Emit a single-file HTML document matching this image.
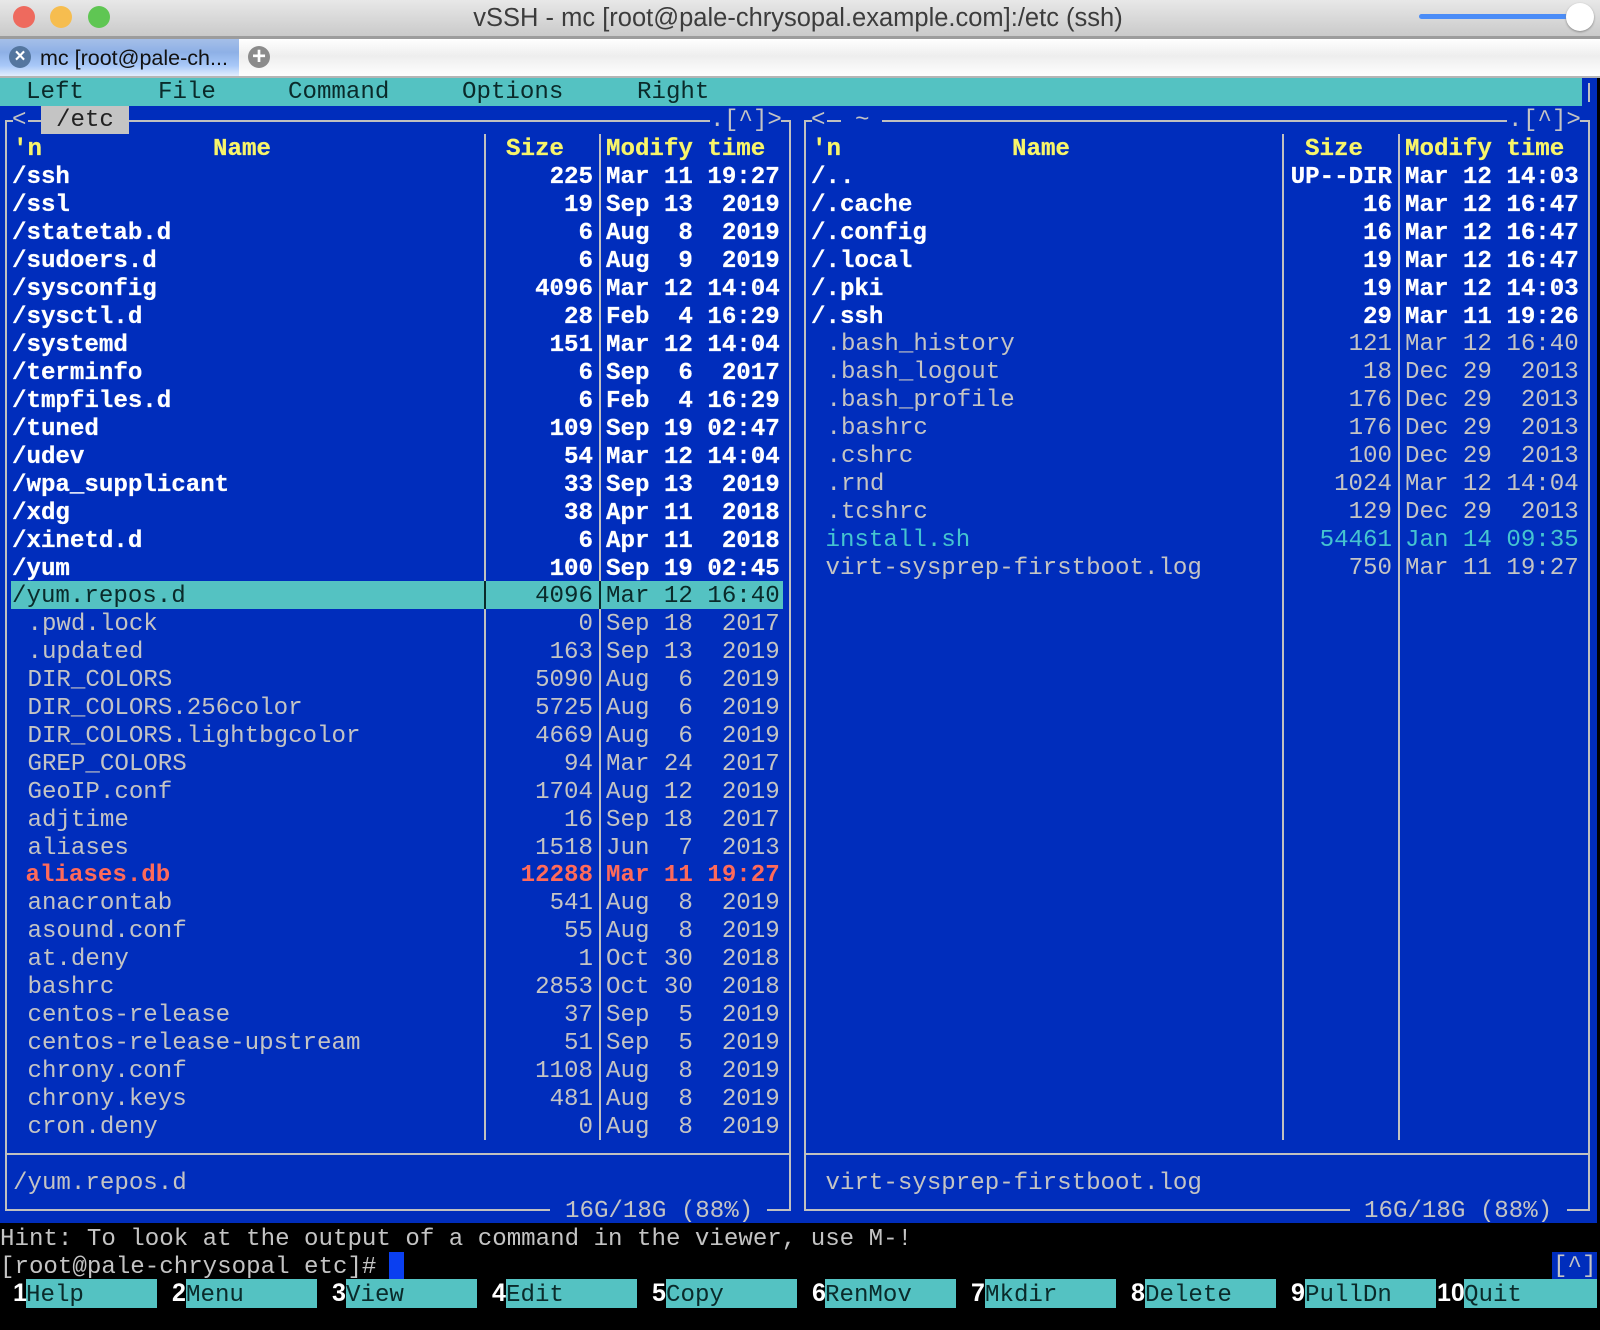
<!DOCTYPE html>
<html><head><meta charset="utf-8"><style>
html,body{margin:0;padding:0;background:#000}
#r{position:relative;width:1600px;height:1330px;overflow:hidden;background:#000;font-family:"Liberation Mono",monospace;font-size:24.14px}
pre{position:absolute;margin:2.8px 0 0;font:inherit;line-height:28px;color:#c4c4c4;white-space:pre}
.b{font-weight:bold;color:#fff;-webkit-text-stroke:.25px #fff}
.y{font-weight:bold;color:#f8f56a;-webkit-text-stroke:.25px #f8f56a}
.k{color:#0a2a2a}
.e{font-weight:bold;color:#ff6a5a}
.c{color:#45c4d0}
.s{text-align:right;width:110px}
.d{position:absolute;background:#c0c0c0}
.a{position:absolute}
.t{position:absolute;background:#54c2c2;height:29px;top:1279px}
.n{position:absolute;font-weight:bold;color:#fff;top:1279px;line-height:28px;font-family:"Liberation Sans",sans-serif;font-size:25px}
</style></head><body><div id="r">
<div class="a" style="left:0;top:0;width:1600px;height:37px;background:linear-gradient(#e8e8e8,#c9c9c9)"></div>
<div class="a" style="left:0;top:36px;width:1600px;height:3px;background:#9c9c9c"></div>
<div class="a" style="left:13px;top:6px;width:22px;height:22px;border-radius:50%;background:#ee6a5e"></div>
<div class="a" style="left:50px;top:6px;width:22px;height:22px;border-radius:50%;background:#f6bd4f"></div>
<div class="a" style="left:88px;top:6px;width:22px;height:22px;border-radius:50%;background:#5fc653"></div>
<div class="a" style="left:0;top:3px;width:1600px;text-align:center;padding-right:4px;box-sizing:border-box;font-family:'Liberation Sans',sans-serif;font-size:25.5px;line-height:30px;color:#3c3c3c">vSSH - mc [root@pale-chrysopal.example.com]:/etc (ssh)</div>
<div class="a" style="left:1419px;top:14px;width:150px;height:5px;border-radius:3px;background:#4a8cf7"></div>
<div class="a" style="left:1566px;top:3px;width:28px;height:28px;border-radius:50%;background:#fff;box-shadow:0 1px 2px #888"></div>
<div class="a" style="left:0;top:39px;width:1600px;height:38px;background:linear-gradient(#fff,#eee 45%,#fff)"></div>
<div class="a" style="left:0;top:39px;width:239px;height:38px;background:linear-gradient(#a5bfe8,#8eb0e6 35%,#a8c8f8 70%,#e8f2ff)"></div>
<div class="a" style="left:9px;top:46px;width:22px;height:22px;border-radius:50%;background:#54769f;color:#fff;font:bold 19px/22px 'Liberation Sans',sans-serif;text-align:center">×</div>
<div class="a" style="left:40px;top:43px;font-family:'Liberation Sans',sans-serif;font-size:21.5px;line-height:30px;color:#111;white-space:pre">mc [root@pale-ch...</div>
<div class="a" style="left:248px;top:46px;width:22px;height:22px;border-radius:50%;background:#8b8b8b;color:#fff;font:bold 24px/22px 'Liberation Sans',sans-serif;text-align:center">+</div>
<div class="a" style="left:0;top:76px;width:1600px;height:2px;background:#b5b5b5"></div>

<div class="a" style="left:0;top:78px;width:1597px;height:1145px;background:#002dbc"></div>
<div class="a" style="left:0;top:78px;width:1582px;height:28px;background:#54c2c2"></div>
<div class="d" style="left:1588px;top:83px;width:2px;height:19px"></div>
<pre class="k" style="left:26px;top:76px">Left</pre>
<pre class="k" style="left:158px;top:76px">File</pre>
<pre class="k" style="left:288px;top:76px">Command</pre>
<pre class="k" style="left:462px;top:76px">Options</pre>
<pre class="k" style="left:637px;top:76px">Right</pre>

<!-- frames -->
<div class="d" style="left:5px;top:120px;width:2px;height:1091px"></div>
<div class="d" style="left:789px;top:120px;width:2px;height:1091px"></div>
<div class="d" style="left:5px;top:120px;width:8px;height:2px"></div>
<div class="d" style="left:28px;top:120px;width:14px;height:2px"></div>
<div class="d" style="left:129px;top:120px;width:581px;height:2px"></div>
<div class="d" style="left:781px;top:120px;width:10px;height:2px"></div>
<div class="d" style="left:5px;top:1153px;width:786px;height:2px"></div>
<div class="d" style="left:5px;top:1209px;width:545px;height:2px"></div>
<div class="d" style="left:767px;top:1209px;width:24px;height:2px"></div>
<div class="d" style="left:484px;top:134px;width:2px;height:1006px"></div>
<div class="d" style="left:599px;top:134px;width:2px;height:1006px"></div>
<div class="a" style="left:41px;top:106px;width:88px;height:28px;background:#c4c4c4"></div>
<pre class="k" style="left:56px;top:104px;color:#222">/etc</pre>
<pre style="left:12px;top:104px">&lt;</pre>
<pre style="left:710px;top:104px">.</pre>
<pre style="left:724px;top:104px">[^]&gt;</pre>

<div class="d" style="left:804px;top:120px;width:2px;height:1091px"></div>
<div class="d" style="left:1588px;top:120px;width:2px;height:1091px"></div>
<div class="d" style="left:804px;top:120px;width:8px;height:2px"></div>
<div class="d" style="left:827px;top:120px;width:14px;height:2px"></div>
<div class="d" style="left:882px;top:120px;width:625px;height:2px"></div>
<div class="d" style="left:1580px;top:120px;width:10px;height:2px"></div>
<div class="d" style="left:804px;top:1153px;width:786px;height:2px"></div>
<div class="d" style="left:804px;top:1209px;width:546px;height:2px"></div>
<div class="d" style="left:1567px;top:1209px;width:23px;height:2px"></div>
<div class="d" style="left:1282px;top:134px;width:2px;height:1006px"></div>
<div class="d" style="left:1398px;top:134px;width:2px;height:1006px"></div>
<pre style="left:811px;top:104px">&lt;</pre>
<pre style="left:855px;top:104px">~</pre>
<pre style="left:1508px;top:104px">.</pre>
<pre style="left:1523px;top:104px">[^]&gt;</pre>

<!-- left headers -->
<pre class="y" style="left:13px;top:133px">'n</pre>
<pre class="y" style="left:213px;top:133px">Name</pre>
<pre class="y" style="left:506px;top:133px">Size</pre>
<pre class="y" style="left:606px;top:133px">Modify time</pre>

<!-- left bold -->
<pre class="b" style="left:12px;top:161px">/ssh
/ssl
/statetab.d
/sudoers.d
/sysconfig
/sysctl.d
/systemd
/terminfo
/tmpfiles.d
/tuned
/udev
/wpa_supplicant
/xdg
/xinetd.d
/yum</pre>
<pre class="b s" style="left:483px;top:161px">225
19
6
6
4096
28
151
6
6
109
54
33
38
6
100</pre>
<pre class="b" style="left:606px;top:161px">Mar 11 19:27
Sep 13  2019
Aug  8  2019
Aug  9  2019
Mar 12 14:04
Feb  4 16:29
Mar 12 14:04
Sep  6  2017
Feb  4 16:29
Sep 19 02:47
Mar 12 14:04
Sep 13  2019
Apr 11  2018
Apr 11  2018
Sep 19 02:45</pre>

<!-- selected -->
<div class="a" style="left:11px;top:581px;width:772px;height:28px;background:#54c2c2"></div>
<div class="a" style="left:484px;top:581px;width:2px;height:28px;background:#0a2a2a"></div>
<div class="a" style="left:599px;top:581px;width:2px;height:28px;background:#0a2a2a"></div>
<pre class="k" style="left:12px;top:580px">/yum.repos.d</pre>
<pre class="k s" style="left:483px;top:580px">4096</pre>
<pre class="k" style="left:606px;top:580px">Mar 12 16:40</pre>

<!-- left normal -->
<pre style="left:13px;top:608px"> .pwd.lock
 .updated
 DIR_COLORS
 DIR_COLORS.256color
 DIR_COLORS.lightbgcolor
 GREP_COLORS
 GeoIP.conf
 adjtime
 aliases</pre>
<pre class="s" style="left:483px;top:608px">0
163
5090
5725
4669
94
1704
16
1518</pre>
<pre style="left:606px;top:608px">Sep 18  2017
Sep 13  2019
Aug  6  2019
Aug  6  2019
Aug  6  2019
Mar 24  2017
Aug 12  2019
Sep 18  2017
Jun  7  2013</pre>
<pre class="e" style="left:11px;top:859.7px"> aliases.db</pre>
<pre class="e s" style="left:483px;top:859.7px">12288</pre>
<pre class="e" style="left:606px;top:859.7px">Mar 11 19:27</pre>
<pre style="left:13px;top:887.5px"> anacrontab
 asound.conf
 at.deny
 bashrc
 centos-release
 centos-release-upstream
 chrony.conf
 chrony.keys
 cron.deny</pre>
<pre class="s" style="left:483px;top:887.5px">541
55
1
2853
37
51
1108
481
0</pre>
<pre style="left:606px;top:887.5px">Aug  8  2019
Aug  8  2019
Oct 30  2018
Oct 30  2018
Sep  5  2019
Sep  5  2019
Aug  8  2019
Aug  8  2019
Aug  8  2019</pre>
<pre style="left:13px;top:1167.2px">/yum.repos.d</pre>
<pre style="left:565px;top:1195px">16G/18G (88%)</pre>

<!-- right -->
<pre class="y" style="left:812px;top:133px">'n</pre>
<pre class="y" style="left:1012px;top:133px">Name</pre>
<pre class="y" style="left:1305px;top:133px">Size</pre>
<pre class="y" style="left:1405px;top:133px">Modify time</pre>
<pre class="b" style="left:811px;top:161px">/..
/.cache
/.config
/.local
/.pki
/.ssh</pre>
<pre class="b s" style="left:1282px;top:161px">UP--DIR
16
16
19
19
29</pre>
<pre class="b" style="left:1405px;top:161px">Mar 12 14:03
Mar 12 16:47
Mar 12 16:47
Mar 12 16:47
Mar 12 14:03
Mar 11 19:26</pre>
<pre style="left:812px;top:328.7px"> .bash_history
 .bash_logout
 .bash_profile
 .bashrc
 .cshrc
 .rnd
 .tcshrc</pre>
<pre class="s" style="left:1282px;top:328.7px">121
18
176
176
100
1024
129</pre>
<pre style="left:1405px;top:328.7px">Mar 12 16:40
Dec 29  2013
Dec 29  2013
Dec 29  2013
Dec 29  2013
Mar 12 14:04
Dec 29  2013</pre>
<pre class="c" style="left:811px;top:524.3px"> install.sh</pre>
<pre class="c s" style="left:1282px;top:524.3px">54461</pre>
<pre class="c" style="left:1405px;top:524.3px">Jan 14 09:35</pre>
<pre style="left:811px;top:552.25px"> virt-sysprep-firstboot.log</pre>
<pre class="s" style="left:1282px;top:552.25px">750</pre>
<pre style="left:1405px;top:552.25px">Mar 11 19:27</pre>
<pre style="left:811px;top:1167.2px"> virt-sysprep-firstboot.log</pre>
<pre style="left:1364px;top:1195px">16G/18G (88%)</pre>

<!-- bottom -->
<pre style="left:0;top:1223px">Hint: To look at the output of a command in the viewer, use M-!</pre>
<pre style="left:0;top:1251px">[root@pale-chrysopal etc]#</pre>
<div class="a" style="left:389px;top:1252px;width:15px;height:27px;background:#0a3ff0"></div>
<div class="a" style="left:1552px;top:1252px;width:45px;height:27px;background:#002dbc"></div>
<pre style="left:1553px;top:1250px">[^]</pre>

<div class="t" style="left:26px;width:131px"></div>
<div class="t" style="left:186px;width:131px"></div>
<div class="t" style="left:346px;width:131px"></div>
<div class="t" style="left:506px;width:131px"></div>
<div class="t" style="left:666px;width:131px"></div>
<div class="t" style="left:825px;width:131px"></div>
<div class="t" style="left:985px;width:131px"></div>
<div class="t" style="left:1145px;width:131px"></div>
<div class="t" style="left:1305px;width:131px"></div>
<div class="t" style="left:1464px;width:133px"></div>
<div class="n" style="left:13px">1</div>
<div class="n" style="left:172px">2</div>
<div class="n" style="left:332px">3</div>
<div class="n" style="left:492px">4</div>
<div class="n" style="left:652px">5</div>
<div class="n" style="left:812px">6</div>
<div class="n" style="left:971px">7</div>
<div class="n" style="left:1131px">8</div>
<div class="n" style="left:1291px">9</div>
<div class="n" style="left:1437px">10</div>
<pre class="k" style="left:26px;top:1279px">Help</pre>
<pre class="k" style="left:186px;top:1279px">Menu</pre>
<pre class="k" style="left:346px;top:1279px">View</pre>
<pre class="k" style="left:506px;top:1279px">Edit</pre>
<pre class="k" style="left:666px;top:1279px">Copy</pre>
<pre class="k" style="left:825px;top:1279px">RenMov</pre>
<pre class="k" style="left:985px;top:1279px">Mkdir</pre>
<pre class="k" style="left:1145px;top:1279px">Delete</pre>
<pre class="k" style="left:1305px;top:1279px">PullDn</pre>
<pre class="k" style="left:1464px;top:1279px">Quit</pre>
</div></body></html>
